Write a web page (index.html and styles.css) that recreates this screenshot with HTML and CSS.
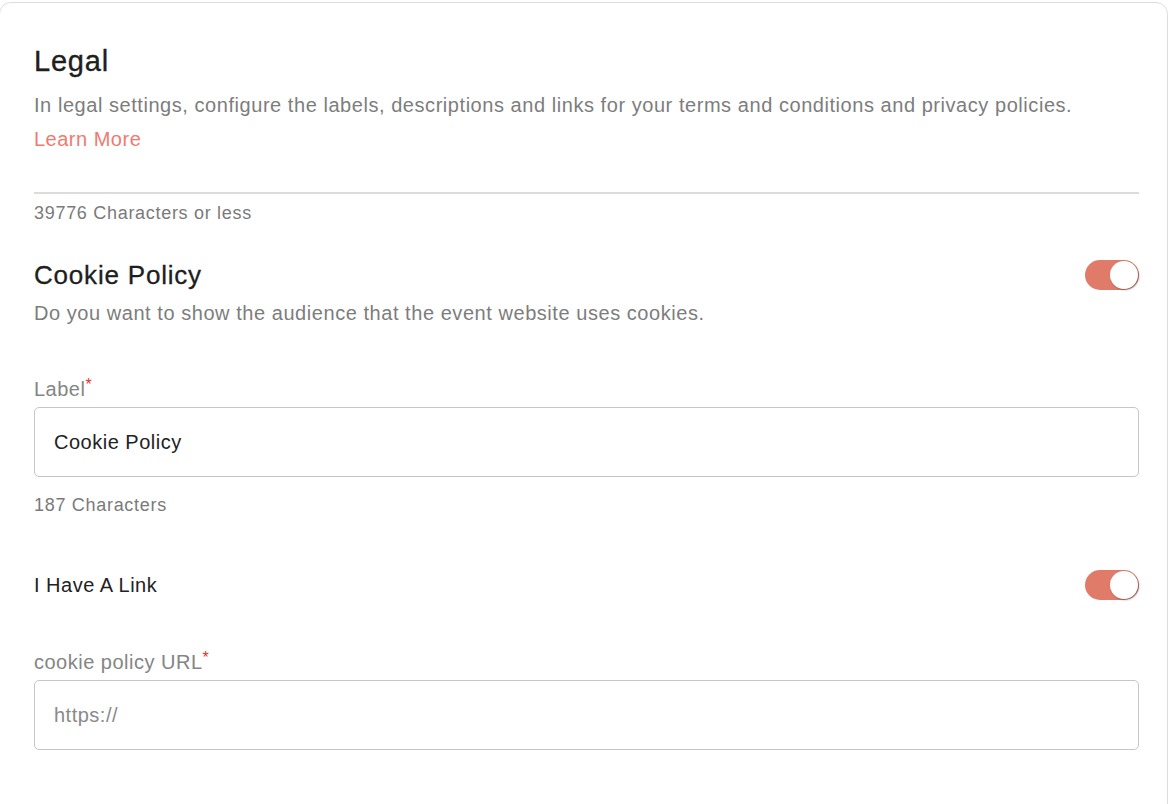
FILE: index.html
```html
<!DOCTYPE html>
<html>
<head>
<meta charset="utf-8">
<link rel="stylesheet" href="styles.css">
</head>
<body>
<div class="card">
  <h1 class="title">Legal</h1>
  <p class="desc">In legal settings, configure the labels, descriptions and links for your terms and conditions and privacy policies.</p>
  <a class="learn">Learn More</a>
  <div class="divider"></div>
  <div class="hint first-hint">39776 Characters or less</div>

  <div class="row section-row">
    <h2 class="subtitle">Cookie Policy</h2>
    <span class="toggle"><span class="knob"></span></span>
  </div>
  <p class="desc sub-desc">Do you want to show the audience that the event website uses cookies.</p>

  <label class="field-label label-1">Label<span class="req">*</span></label>
  <div class="input"><span class="value">Cookie Policy</span></div>
  <div class="hint">187 Characters</div>

  <div class="row link-row">
    <span class="link-text">I Have A Link</span>
    <span class="toggle"><span class="knob"></span></span>
  </div>

  <label class="field-label label-2">cookie policy URL<span class="req">*</span></label>
  <div class="input"><span class="placeholder">https://</span></div>
</div>
</body>
</html>
```

FILE: styles.css
```css
html, body {
  margin: 0;
  padding: 0;
  background: #ffffff;
  font-family: "Liberation Sans", Arial, sans-serif;
}
.card {
  margin-top: 2px;
  margin-left: -1px;
  width: 1169px;
  box-sizing: border-box;
  border: 1px solid #dedede;
  border-radius: 12px;
  padding: 0 28px 60px 34px;
  height: 820px;
}
.title {
  margin: 40px 0 0 0;
  font-size: 29px;
  letter-spacing: 0.8px;
  font-weight: 400;
  color: #1e1e1e;
  line-height: 36px;
  -webkit-text-stroke: 0.35px #1e1e1e;
}
.desc {
  margin: 14px 0 0 0;
  font-size: 20px;
  letter-spacing: 0.55px;
  line-height: 24px;
  color: #7d7d7d;
}
.learn {
  display: block;
  margin-top: 10px;
  font-size: 20px;
  letter-spacing: 0.5px;
  line-height: 24px;
  color: #ef7b70;
}
.divider {
  margin-top: 41px;
  height: 2px;
  background: #dcdcdc;
}
.hint {
  font-size: 18px;
  letter-spacing: 0.7px;
  line-height: 20px;
  color: #7a7a7a;
  margin-top: 18px;
}
.first-hint {
  margin-top: 9px;
}
.row {
  display: flex;
  align-items: center;
  justify-content: space-between;
}
.section-row {
  margin-top: 30px;
  height: 44px;
}
.subtitle {
  margin: 0;
  font-size: 26px;
  letter-spacing: 0.8px;
  font-weight: 400;
  color: #1e1e1e;
  -webkit-text-stroke: 0.3px #1e1e1e;
}
.sub-desc {
  margin-top: 4px;
}
.toggle {
  width: 54px;
  height: 30px;
  border-radius: 15px;
  background: #e07b6a;
  position: relative;
  flex: none;
}
.knob {
  position: absolute;
  right: 1px;
  top: 1px;
  width: 28px;
  height: 28px;
  border-radius: 50%;
  background: #fff;
  box-shadow: 1px 1px 2px rgba(0,0,0,0.35);
}
.field-label {
  display: block;
  font-size: 20px;
  letter-spacing: 0.5px;
  line-height: 24px;
  color: #858585;
}
.label-1 {
  margin-top: 48px;
}
.label-2 {
  margin-top: 46px;
}
.req {
  color: #e0342c;
  font-size: 16px;
  letter-spacing: 0;
  vertical-align: 6px;
}
.input {
  margin-top: 6px;
  height: 70px;
  box-sizing: border-box;
  border: 1px solid #c6c6c6;
  border-radius: 5px;
  padding-left: 19px;
  display: flex;
  align-items: center;
  font-size: 20px;
  letter-spacing: 0.5px;
}
.value {
  color: #222;
}
.placeholder {
  color: #8a8a8a;
}
.link-row {
  margin-top: 55px;
  height: 30px;
}
.link-text {
  font-size: 20px;
  letter-spacing: 0.5px;
  color: #222;
}
```
